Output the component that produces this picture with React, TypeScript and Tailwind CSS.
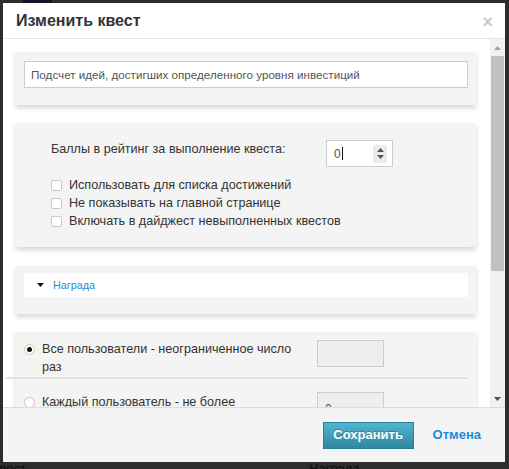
import React from "react";

const FONT = { fontFamily: '"Liberation Sans", Arial, sans-serif' };

function Card({ className = "", children }: { className?: string; children: React.ReactNode }) {
  return (
    <div className={"bg-[#f4f4f4] shadow-[0_3px_5px_rgba(0,0,0,0.16)] " + className}>{children}</div>
  );
}

function Checkbox({ label }: { label: string }) {
  return (
    <label className="flex h-[18px] items-center gap-[7px] text-[12.6px] text-[#333]">
      <span className="h-[11px] w-[11px] rounded-[2px] border border-[#c9c9c9] bg-white" />
      {label}
    </label>
  );
}

function Radio({ checked }: { checked?: boolean }) {
  return (
    <span
      className={
        "mt-[4px] flex h-[11px] w-[11px] shrink-0 items-center justify-center rounded-full border bg-white " +
        (checked ? "border-[#e2c88f]" : "border-[#c4c4c4]")
      }
    >
      {checked && <span className="h-[5px] w-[5px] rounded-full bg-[#111]" />}
    </span>
  );
}

function Scrollbar() {
  return (
    <div className="flex w-[15px] flex-col items-center bg-[#f1f1f1]">
      <div className="flex h-[17px] items-center justify-center">
        <svg width="7" height="4" viewBox="0 0 7 4">
          <path d="M0 4L3.5 0L7 4Z" fill="#a3a3a3" />
        </svg>
      </div>
      <div className="h-[215px] w-[13px] bg-[#c1c1c1]" />
      <div className="flex-1" />
      <div className="flex h-[17px] items-center justify-center">
        <svg width="7" height="4" viewBox="0 0 7 4">
          <path d="M0 0L7 0L3.5 4Z" fill="#505050" />
        </svg>
      </div>
    </div>
  );
}

export default function App() {
  return (
    <div className="relative flex h-[469px] w-[509px] flex-col justify-between overflow-hidden bg-[#2d2d2d]" style={FONT}>
      {/* page underneath */}
      <div className="ml-[23px] h-[3px] w-[29px] bg-[#12122a]" />
      <div className="-mb-[9px] flex h-[18px] text-[13px] leading-[18px] text-[#0c0c0c]">
        <span className="-ml-[8px]">Квест</span>
        <span className="ml-[283px]">Награда</span>
      </div>

      {/* dialog */}
      <div className="absolute left-[3px] top-[3px] flex h-[459px] w-[502px] flex-col bg-white">
        <div className="flex h-[36px] shrink-0 items-center justify-between border-b border-[#e5e5e5] pl-[13px] pr-[12px]">
          <h2 className="text-[16px] font-bold text-[#333]">Изменить квест</h2>
          <span className="mt-[3px] text-[18px] font-bold leading-none text-[#c9c9c9]">×</span>
        </div>

        <div className="flex min-h-0 flex-1">
          <div className="min-w-0 flex-1 overflow-hidden pl-[13px] pr-[14px] pt-[13px]">
            <Card className="px-[8px] pb-[17px] pt-[9px]">
              <div className="flex h-[27px] items-center border border-[#cccccc] bg-white pl-[6px] text-[11.65px] text-[#555]">
                Подсчет идей, достигших определенного уровня инвестиций
              </div>
            </Card>

            <Card className="mt-[18px] pb-[17px] pl-[35px] pt-[17px]">
              <div className="flex items-start">
                <span className="w-[275px] text-[12.6px] leading-[18px] text-[#333]">
                  Баллы в рейтинг за выполнение квеста:
                </span>
                <div className="flex h-[27px] w-[67px] items-center justify-between border border-[#cccccc] bg-white pl-[7px] pr-[5px]">
                  <span className="flex items-center text-[12px] text-[#555]">
                    0<span className="ml-[1px] h-[13px] w-px bg-[#111]" />
                  </span>
                  <span className="flex h-[18px] w-[14px] flex-col items-center justify-center gap-[3px] bg-[#ececec]">
                    <svg width="7" height="4" viewBox="0 0 7 4">
                      <path d="M0 4L3.5 0L7 4Z" fill="#555" />
                    </svg>
                    <svg width="7" height="4" viewBox="0 0 7 4">
                      <path d="M0 0L7 0L3.5 4Z" fill="#555" />
                    </svg>
                  </span>
                </div>
              </div>
              <div className="mt-[9px] flex flex-col">
                <Checkbox label="Использовать для списка достижений" />
                <Checkbox label="Не показывать на главной странице" />
                <Checkbox label="Включать в дайджест невыполненных квестов" />
              </div>
            </Card>

            <Card className="mt-[19px] px-[8px] pb-[17px] pt-[7px]">
              <div className="flex h-[24px] items-center bg-white pl-[13px]">
                <svg width="7" height="4" viewBox="0 0 7 4">
                  <path d="M0 0L7 0L3.5 4Z" fill="#111" />
                </svg>
                <a className="ml-[9px] text-[10.8px] text-[#2a8ad4]">Награда</a>
              </div>
            </Card>

            <Card className="mt-[18px] pl-[8px] pt-[8px]">
              <div className="flex items-start">
                <Radio checked />
                <span className="ml-[7px] w-[268px] text-[12.6px] leading-[18px] text-[#333]">
                  Все пользователи - неограниченное число раз
                </span>
                <span className="ml-[7px] h-[27px] w-[67px] border border-[#cccccc] bg-[#eeeeee]" />
              </div>
              <div className="-ml-[18px] mr-[8px] mt-px h-[2px] bg-[#e2e2e2]" />
              <div className="mt-[14px] flex items-start">
                <Radio />
                <span className="ml-[7px] w-[268px] text-[12.6px] leading-[18px] text-[#333]">
                  Каждый пользователь - не более
                </span>
                <span className="ml-[7px] -mt-[1px] flex h-[27px] w-[67px] items-end border border-[#cccccc] bg-[#eeeeee] pl-[7px] text-[12px] text-[#555]">
                  0
                </span>
              </div>
            </Card>
          </div>
          <Scrollbar />
        </div>

        <div className="flex h-[55px] shrink-0 items-center justify-end border-t border-[#dddddd] bg-[#f4f4f4] pr-[24px]">
          <button className="h-[27px] w-[91px] border border-[#2b7d93] bg-gradient-to-b from-[#52b5d2] to-[#2d879f] text-[13px] font-bold text-white [text-shadow:0_-1px_0_rgba(0,0,0,0.25)]">
            Сохранить
          </button>
          <a className="ml-[19px] text-[13px] font-bold text-[#1a8dd8]">Отмена</a>
        </div>
      </div>
    </div>
  );
}
